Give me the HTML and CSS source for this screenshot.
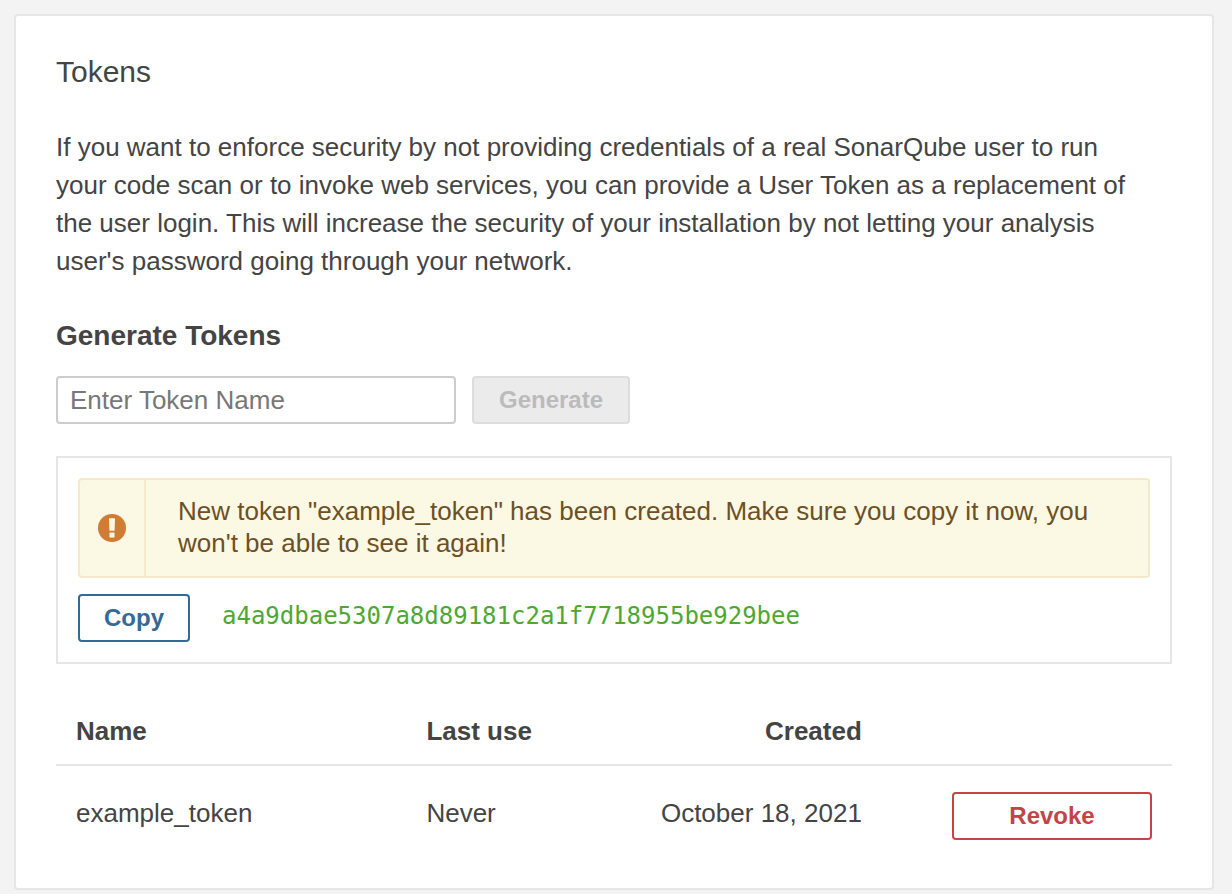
FILE: index.html
```html
<!DOCTYPE html>
<html lang="en">
<head>
<meta charset="utf-8">
<title>Tokens</title>
<link rel="stylesheet" href="styles.css">
</head>
<body>
<main class="card">
  <h1 class="title">Tokens</h1>
  <p class="intro">If you want to enforce security by not providing credentials of a real SonarQube user to run your code scan or to invoke web services, you can provide a User Token as a replacement of the user login. This will increase the security of your installation by not letting your analysis user's password going through your network.</p>
  <h2 class="subtitle">Generate Tokens</h2>
  <form class="generate">
    <input class="field" type="text" placeholder="Enter Token Name" aria-label="Token name">
    <button class="button button-disabled" type="submit" disabled>Generate</button>
  </form>
  <section class="panel">
    <div class="alert" role="alert">
      <div class="alert-icon">
        <svg width="28" height="28" viewBox="0 0 28 28" aria-hidden="true">
          <circle cx="14" cy="14" r="14" fill="#d07c34"/>
          <path d="M11.4 4.2h5.200q.4 0 .4.4l-.4 11.800q0 .4-.4.4h-4.400q-.4 0-.4-.4l-.4-11.800q0-.4.4-.4zM12 18.4h4q.5 0 .5.5v4q0 .5-.5.5h-4q-.5 0-.5-.5v-4q0-.5.5-.5z" fill="#fbf8e4"/>
        </svg>
      </div>
      <div class="alert-text">New token "example_token" has been created. Make sure you copy it now, you won't be able to see it again!</div>
    </div>
    <div class="token">
      <button class="button button-copy" type="button">Copy</button>
      <code class="token-value">a4a9dbae5307a8d89181c2a1f7718955be929bee</code>
    </div>
  </section>
  <table class="tokens">
    <thead>
      <tr>
        <th class="col-name" scope="col">Name</th>
        <th class="col-use" scope="col">Last use</th>
        <th class="col-created" scope="col">Created</th>
        <td class="col-action"></td>
      </tr>
    </thead>
    <tbody>
      <tr>
        <td>example_token</td>
        <td>Never</td>
        <td class="col-created">October 18, 2021</td>
        <td class="col-action"><button class="button button-revoke" type="button">Revoke</button></td>
      </tr>
    </tbody>
  </table>
</main>
</body>
</html>
```
FILE: styles.css
```css
* {
  box-sizing: border-box;
}

body {
  margin: 0;
  padding: 14px 18px 4px 14px;
  background: #f3f3f3;
  color: #444;
  font-family: "Helvetica Neue", "Liberation Sans", Arial, sans-serif;
  font-size: 26px;
  line-height: 38px;
}

.card {
  padding: 36px 40px 28px;
  border: 2px solid #e6e6e6;
  border-radius: 4px;
  background: #fff;
}

.title {
  margin: 0 0 36px;
  font-size: 30px;
  font-weight: 400;
  line-height: 40px;
}

.intro {
  margin: 0 0 36px;
  padding-right: 28px;
}

.subtitle {
  margin: 0 0 20px;
  font-size: 28px;
  font-weight: 700;
  line-height: 40px;
}

.generate {
  display: flex;
  gap: 16px;
  margin: 0 0 32px;
}

.field {
  width: 400px;
  height: 48px;
  padding: 0 12px;
  border: 2px solid #cdcdcd;
  border-radius: 4px;
  background: #fff;
  color: #444;
  font: inherit;
}

.field::placeholder {
  color: #777;
}

.button {
  height: 48px;
  padding: 0 24px;
  border: 2px solid;
  border-radius: 4px;
  background: #fff;
  font-family: inherit;
  font-size: 24px;
  font-weight: 700;
  line-height: 40px;
}

.button-disabled {
  min-width: 158px;
  border-color: #ddd;
  background: #ebebeb;
  color: #bbb;
}

.button-copy {
  color: #346a95;
}

.button-revoke {
  width: 200px;
  color: #c54247;
}

.panel {
  padding: 20px;
  border: 2px solid #e6e6e6;
}

.alert {
  display: flex;
  border: 2px solid #f6e9ca;
  border-radius: 4px;
  background: #fbf8e4;
  color: #6d5025;
  line-height: 32px;
}

.alert-icon {
  display: flex;
  flex: none;
  align-items: center;
  justify-content: center;
  width: 66px;
  border-right: 2px solid #f6e9ca;
}

.alert-text {
  padding: 15px 32px 17px;
}

.token {
  display: flex;
  gap: 32px;
  margin-top: 16px;
}

.token-value {
  color: #4da832;
  font-family: "DejaVu Sans Mono", monospace;
  font-size: 24px;
  line-height: 44px;
}

.tokens {
  width: 100%;
  margin-top: 32px;
  border-collapse: collapse;
  table-layout: fixed;
}

.tokens th,
.tokens td {
  padding: 16px 20px 14px;
  text-align: left;
  vertical-align: top;
}

.tokens thead th,
.tokens thead td {
  border-bottom: 2px solid #e6e6e6;
}

.tokens tbody td {
  padding: 28px 20px 20px;
}

.tokens tbody .col-action {
  padding-top: 26px;
}

.tokens .col-name {
  width: 31.4%;
}

.tokens .col-use {
  width: 19%;
}

.tokens .col-created {
  text-align: right;
}

.tokens .col-action {
  width: 26%;
  text-align: right;
}

.col-action .button {
  display: block;
  margin-left: auto;
}
```
